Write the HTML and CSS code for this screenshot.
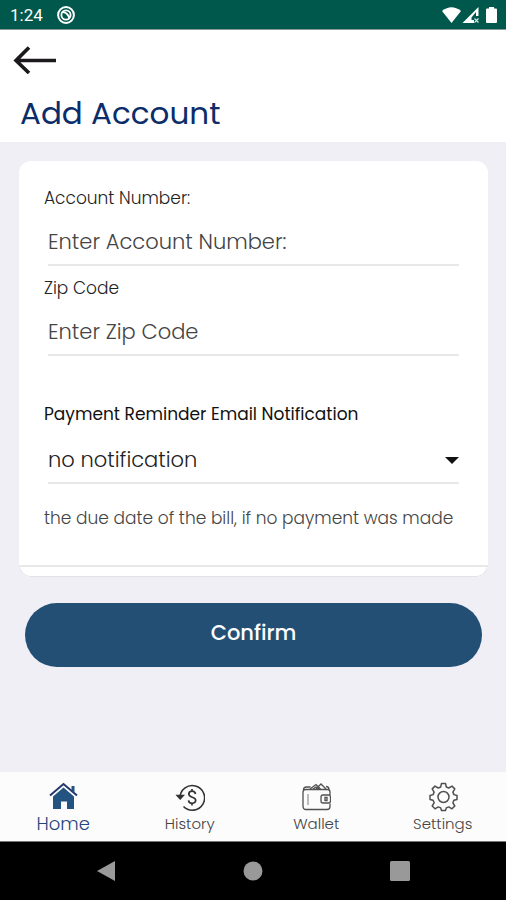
FILE: index.html
```html
<!DOCTYPE html>
<html lang="en">
<head>
<meta charset="utf-8">
<meta name="viewport" content="width=device-width, initial-scale=1">
<title>Add Account</title>
<link rel="stylesheet" href="styles.css">
</head>
<body>
<div class="status-bar">
  <span class="clock">1:24</span>
  <svg class="status-app" viewBox="0 0 18 18" width="18" height="18" aria-hidden="true">
    <circle cx="9" cy="9" r="7.900" fill="none" stroke="#fff" stroke-width="2"/>
    <circle cx="9" cy="9" r="4.600" fill="none" stroke="#fff" stroke-width="1.800"/>
    <path d="M5.500 6Q10 6 12.500 12" fill="none" stroke="#fff" stroke-width="2"/>
  </svg>
  <svg class="status-icons" viewBox="0 0 56 18" width="56" height="18" aria-hidden="true">
    <path d="M0 5Q9.500-2.500 19 5L9.500 17Z" fill="#fff"/>
    <path d="M20.500 17L36.500 1V10H34V6L29.500 11.500V14H32V17Z" fill="#fff"/>
    <path d="M32.500 12.500l4 4m0-4l-4 4" stroke="#d5e5e2" stroke-width="1.200"/>
    <path d="M47 1h5v1.500h2q1 0 1 1V16q0 1-1 1h-9q-1 0-1-1V3.500q0-1 1-1h2z" fill="#fff"/>
  </svg>
</div>

<header class="header">
  <button class="back" type="button" aria-label="Back">
    <svg viewBox="0 0 44 28" width="44" height="28" aria-hidden="true">
      <path d="M17 1.500L4 14.500L17 27M4 14.500H44" fill="none" stroke="#1b191b" stroke-width="3.600"/>
    </svg>
  </button>
  <h1 class="title">Add Account</h1>
</header>

<main class="content">
  <form class="form">
    <div class="card">
      <div class="fields">
        <div class="field">
          <label for="account">Account Number:</label>
          <input id="account" class="control" type="text" placeholder="Enter Account Number:">
        </div>
        <div class="field">
          <label for="zip">Zip Code</label>
          <input id="zip" class="control" type="text" placeholder="Enter Zip Code">
        </div>
        <div class="field field-reminder">
          <label for="reminder">Payment Reminder Email Notification</label>
          <div class="select-wrap">
            <select id="reminder" class="control"><option>no notification</option></select>
          </div>
          <p class="hint">the due date of the bill, if no payment was made</p>
        </div>
      </div>
      <div class="card-foot"></div>
    </div>
    <button class="confirm" type="submit">Confirm</button>
  </form>
</main>

<nav class="tabs" aria-label="Main">
  <a class="tab active" href="#home">
    <svg viewBox="0 0 30 30" width="30" height="30" aria-hidden="true">
      <path d="M5 14.500L15.500 5.500L26 14.500V27H19V19.500H13V27H5Z" fill="#235380"/>
      <path d="M2 13.500L15.500 2L29 13.500" fill="none" stroke="#26376d" stroke-width="2"/>
      <path d="M23.500 4h3v7l-3-2.500z" fill="#235380"/>
    </svg>
    <span>Home</span>
  </a>
  <a class="tab" href="#history">
    <svg viewBox="0 0 30 30" width="30" height="30" aria-hidden="true" fill="none" stroke="#333">
      <path d="M5 16A12.300 12.300 0 1 1 8.500 24.500" stroke-width="1.600"/>
      <path d="M2 13.500l3.200 3.500 3.300-3.500z" fill="#333" stroke-width="1.300"/>
      <path d="M20.500 12q-.5-2.800-3.500-2.800t-3.200 2.900c0 4.200 6.900 2 6.900 6.200q-.2 3-3.500 3t-3.700-3M17 7v2.200m0 12v2.200" stroke-width="1.700"/>
    </svg>
    <span>History</span>
  </a>
  <a class="tab" href="#wallet">
    <svg viewBox="0 0 30 30" width="30" height="30" aria-hidden="true" fill="none" stroke="#505050" stroke-width="1.300">
      <path d="M29 13V10q0-2.500-2.500-2.500h-22Q2 7.500 2 10V24q0 3.500 3 3.500H26q3 0 3-3v-3M2.500 8q0-3 3-3h4M25 4.500q3 0 3 3"/>
      <path d="M9 7l6-4.500L19.500 7M15 7l5-5 5 5M12 7l3-2 3 2"/>
      <rect x="20" y="13" width="9.500" height="8" rx="2"/>
      <path d="M24 15.500h2v3h-2z"/>
      <path d="M7 12v11" stroke="#999"/>
    </svg>
    <span>Wallet</span>
  </a>
  <a class="tab" href="#settings">
    <svg viewBox="0 0 30 30" width="30" height="30" aria-hidden="true" fill="none" stroke="#505050" stroke-width="1.500" stroke-linejoin="round">
      <path d="M13 3h4l.8 3.500 2.500 1 3.200-1.900 2.800 2.800-1.900 3.200 1 2.500 3.100.9v4l-3.100.8-1 2.500 1.900 3.200-2.800 2.800-3.200-1.900-2.500 1L17 30h-4l-.8-2.600-2.500-1-3.200 1.900-2.800-2.800 1.900-3.200-1-2.500L1.500 19v-4l3.100-.9 1-2.500-1.900-3.200 2.800-2.800 3.200 1.900 2.500-1z" transform="translate(.5 -1.500)"/>
      <circle cx="15.500" cy="15" r="5.500"/>
    </svg>
    <span>Settings</span>
  </a>
</nav>

<div class="system-nav">
  <button type="button" aria-label="System back"><svg viewBox="0 0 20 22" width="20" height="22"><path d="M1 11L19 1V21Z" fill="#999"/></svg></button>
  <button type="button" aria-label="System home"><svg viewBox="0 0 20 20" width="20" height="20"><circle cx="10" cy="10" r="9.500" fill="#999"/></svg></button>
  <button type="button" aria-label="Recent apps"><svg viewBox="0 0 20 20" width="20" height="20"><rect width="20" height="20" rx="1.500" fill="#999"/></svg></button>
</div>
</body>
</html>
```

FILE: styles.css
```css
* {
  box-sizing: border-box;
}

body {
  margin: 0;
  min-height: 100vh;
  display: flex;
  flex-direction: column;
  background: #f0eff5;
  color: #222;
  font-family: Poppins, Inter, sans-serif;
  font-size: 17px;
  font-weight: 300;
}

button {
  border: 0;
  padding: 0;
  background: none;
  font-family: inherit;
}

svg {
  display: block;
}

.status-bar {
  display: flex;
  align-items: center;
  height: 30px;
  padding: 0 8px 0 10px;
  background: #00574b;
  border-bottom: 1px solid #8a9995;
  color: #fff;
}

.clock {
  font: 400 17px/20px Roboto, sans-serif;
}

.status-app {
  margin-left: 14px;
}

.status-icons {
  margin-left: auto;
}

.header {
  display: flex;
  flex-direction: column;
  align-items: flex-start;
  padding: 16px 20px 9px 12px;
  background: #fff;
}

.title {
  margin: 19px 0 0 8px;
  color: #0b2d69;
  font-size: 31px;
  font-weight: 400;
  line-height: 40px;
}

.content {
  flex: 1;
  padding: 19px 18px 24px 19px;
}

.card {
  overflow: hidden;
  border-radius: 12px;
  background: #fff;
}

.fields {
  padding: 25px 25px 35px;
}

.field {
  margin-bottom: 10px;
}

.field label {
  display: block;
  line-height: 24px;
}

.control {
  display: block;
  width: calc(100% - 8px);
  height: 56px;
  margin: 0 4px;
  padding: 8px 0 0;
  border: 0;
  border-bottom: 2px solid #e8e8e8;
  border-radius: 0;
  background: transparent;
  color: #222;
  font: inherit;
  font-size: 21px;
  appearance: none;
}

.control::placeholder {
  color: #444;
  opacity: 1;
}

.field-reminder {
  margin: 46px 0 0;
}

.field-reminder label {
  color: #111;
  font-weight: 400;
}

.select-wrap {
  position: relative;
  padding-top: 2px;
}

.select-wrap::after {
  content: "";
  position: absolute;
  top: 31px;
  right: 4px;
  border: 7px solid transparent;
  border-top-color: #111;
  border-bottom: 0;
  pointer-events: none;
}

.hint {
  margin: 22px 0 0;
  color: #444;
  line-height: 24px;
}

.card-foot {
  height: 12px;
  border: 1px solid #e2e2e5;
  border-top: 2px solid #e8e8e8;
  border-radius: 0 0 12px 12px;
}

.confirm {
  display: block;
  width: calc(100% - 12px);
  height: 64px;
  margin: 26px 6px 0;
  padding-bottom: 6px;
  border-radius: 32px;
  background: #234f75;
  color: #fff;
  font-size: 21px;
  font-weight: 500;
}

.tabs {
  display: grid;
  grid-template-columns: repeat(4, 1fr);
  height: 69px;
  background: #fcfcfc;
}

.tab {
  display: flex;
  flex-direction: column;
  align-items: center;
  padding-top: 10px;
  color: #444;
  font-size: 15px;
  line-height: 24px;
  text-decoration: none;
}

.tab.active {
  color: #24447c;
  font-size: 18px;
}

.system-nav {
  display: flex;
  align-items: center;
  justify-content: space-between;
  height: 59px;
  padding: 0 19%;
  border-top: 1px solid #777;
  background: #000;
}
```
